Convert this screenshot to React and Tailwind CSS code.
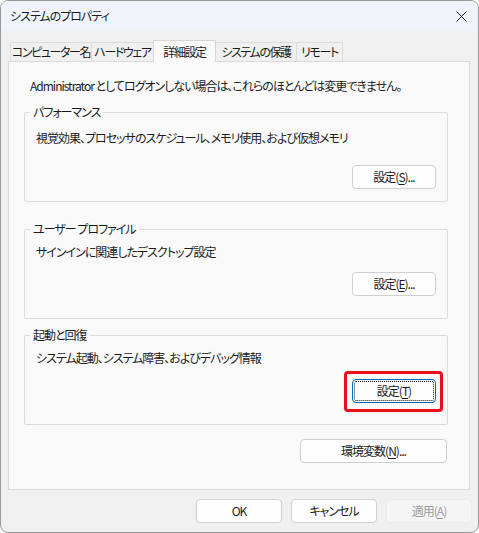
import React from 'react';

const TABS = [
  { label: 'コンピューター名', w: 'w-[82px]' },
  { label: 'ハードウェア', w: 'w-[63px]' },
  { label: '詳細設定', w: 'w-[63px]', active: true },
  { label: 'システムの保護', w: 'w-[82px]' },
  { label: 'リモート', w: 'w-[47px]' },
];

const Key = ({ children }) => <span className="underline underline-offset-2">{children}</span>;

const Btn = ({ children, className = '', disabled }) => (
  <button
    className={`h-[24px] rounded-[4px] border text-[12px] leading-[16px] tracking-[-1px] ${
      disabled
        ? 'border-[#ebebeb] bg-[#f5f5f5] text-[#9d9d9d]'
        : 'border-[#d0d0d0] bg-[#fdfdfd] text-[#1b1b1b]'
    } ${className}`}
  >
    {children}
  </button>
);

const Group = ({ title, children }) => (
  <div className="flex h-[90px] flex-col rounded-[2px] border border-[#dcdcdc]">
    <span className="-mt-[9px] ml-[5px] self-start bg-[#f9f9f9] px-[3px] leading-[16px]">{title}</span>
    {children}
  </div>
);

export default function App() {
  return (
    <div className="h-[533px] w-[479px] bg-white text-[12px] tracking-[-1px] text-[#1b1b1b] font-['Noto_Sans_CJK_JP',sans-serif] [font-feature-settings:'palt']">
      <div className="flex h-full w-full flex-col overflow-hidden rounded-[8px] border border-[#9a9a9a] bg-[#f0f0f0]">
        {/* Title bar */}
        <div className="flex h-[30px] shrink-0 items-center justify-between bg-[#eef4f9] pl-[9px] pr-[11px]">
          <span className="leading-[16px]">システムのプロパティ</span>
          <svg width="11" height="11" viewBox="0 0 11 11">
            <path d="M0.5 0.5 L10.5 10.5 M10.5 0.5 L0.5 10.5" stroke="#1b1b1b" strokeWidth="1" />
          </svg>
        </div>

        {/* Tabs */}
        <div className="flex h-[30px] shrink-0 items-end pl-[9px] pt-[9px]">
          {TABS.map((t, i) => (
            <div
              key={t.label}
              className={`${t.w} ${i > 0 ? '-ml-px' : ''} flex items-center justify-center whitespace-nowrap border border-b-0 leading-[16px] tracking-[-1.4px] ${
                t.active
                  ? 'relative z-10 -mb-px h-[22px] border-[#d6d6d6] bg-[#f9f9f9]'
                  : 'h-[19px] border-[#dcdcdc] bg-[#f0f0f0]'
              }`}
            >
              {t.label}
            </div>
          ))}
        </div>

        {/* Panel */}
        <div className="ml-[7px] flex h-[429px] w-[462px] shrink-0 flex-col border border-[#dadada] bg-[#f9f9f9] pl-[15px] pr-[21px]">
          <p className="mt-[16px] pl-[6px] leading-[16px]">
            Administrator としてログオンしない場合は、これらのほとんどは変更できません。
          </p>

          <div className="mt-[18px]">
            <Group title="パフォーマンス">
              <p className="mt-[10px] pl-[11px] leading-[16px]">
                視覚効果、プロセッサのスケジュール、メモリ使用、および仮想メモリ
              </p>
              <Btn className="mr-[11px] mt-[19px] w-[84px] self-end">
                設定(<Key>S</Key>)...
              </Btn>
            </Group>
          </div>

          <div className="mt-[27px]">
            <Group title="ユーザー プロファイル">
              <p className="mt-[7px] pl-[11px] leading-[16px]">サインインに関連したデスクトップ設定</p>
              <Btn className="mr-[11px] mt-[12px] w-[84px] self-end">
                設定(<Key>E</Key>)...
              </Btn>
            </Group>
          </div>

          <div className="mt-[16px]">
            <Group title="起動と回復">
              <p className="mt-[7px] pl-[11px] leading-[16px]">システム起動、システム障害、およびデバッグ情報</p>
              <div className="relative mr-[11px] mt-[13px] self-end">
                <button className="h-[24px] w-[84px] rounded-[4px] border border-[#0067c0] bg-[#fdfdfd] text-[12px] leading-[16px] tracking-[-1px] outline-1 outline-dotted outline-[#1b1b1b] outline-offset-[-3px]">
                  設定(<Key>T</Key>)
                </button>
                <span className="absolute left-[-8px] top-[-8px] h-[41px] w-[99px] rounded-[4px] border-[3px] border-[#ea0f1a]" />
              </div>
            </Group>
          </div>

          <Btn className="mr-[1px] mt-[14px] w-[147px] self-end">
            環境変数(<Key>N</Key>)...
          </Btn>
        </div>

        {/* Footer buttons */}
        <div className="mt-[9px] flex justify-end gap-[9px] pr-[6px]">
          <Btn className="w-[86px]">OK</Btn>
          <Btn className="w-[86px]">キャンセル</Btn>
          <Btn className="w-[86px]" disabled>
            適用(<Key>A</Key>)
          </Btn>
        </div>
      </div>
    </div>
  );
}
